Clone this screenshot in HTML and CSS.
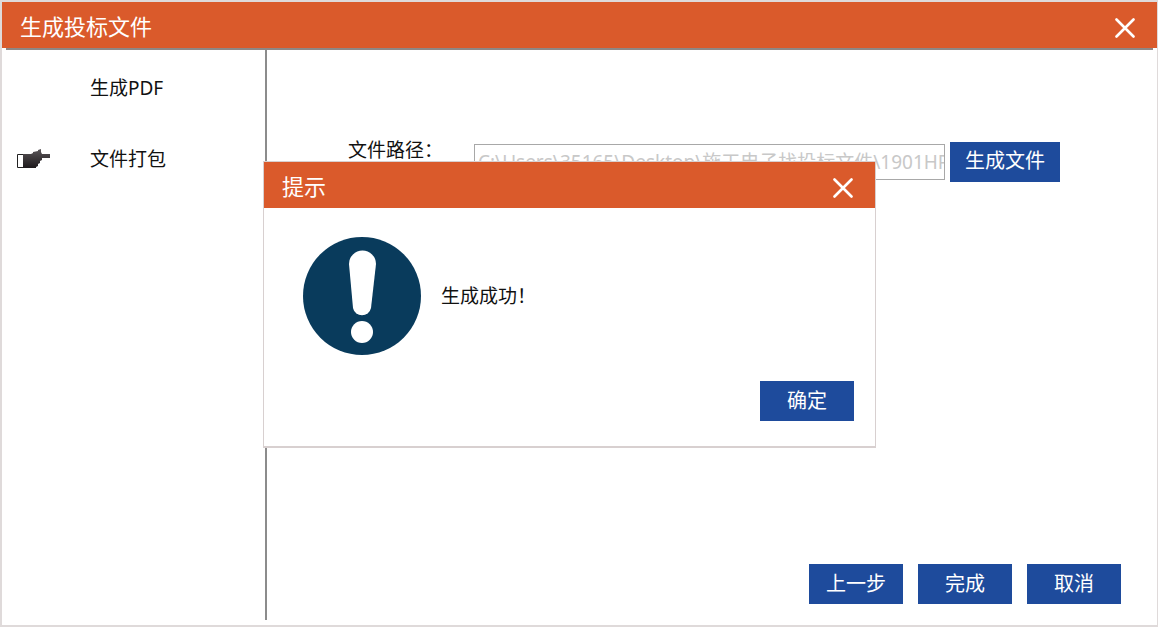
FILE: index.html
```html
<!DOCTYPE html>
<html lang="zh-CN">
<head>
    <meta charset="UTF-8">
    <title>生成投标文件</title>
    <link rel="stylesheet" href="styles.css">
</head>
<body>
    <div class="window">
        <header class="title-bar">
            <h1 class="title">生成投标文件</h1>
            <button type="button" class="close-btn" aria-label="关闭">
                <svg class="close-icon" viewBox="0 0 20 20" fill="none" stroke="#fff" stroke-width="2.600" stroke-linecap="round">
                    <path d="M1.500 1.500L18.500 18.500M18.500 1.500L1.500 18.500"></path>
                </svg>
            </button>
        </header>
        <div class="content">
            <ol class="steps">
                <li class="step">生成PDF</li>
                <li class="step active">
                    <svg class="hand-icon" viewBox="0 0 34 20">
                        <defs>
                            <linearGradient id="hand-fill" x1="0" y1="0" x2="0" y2="1">
                                <stop offset="0" stop-color="#5b5659"></stop>
                                <stop offset="1" stop-color="#1d191b"></stop>
                            </linearGradient>
                        </defs>
                        <path d="M0.500 5.500H7V18.500H0.500Z" fill="#fff" stroke="#222" stroke-width="1"></path>
                        <path d="M6 5H14L16 4V3L21 2V1L24 0V3L25 5H33V9H25V11L23 12V14L21 15V17L19 18V19H6Z" fill="url(#hand-fill)"></path>
                    </svg>
                    文件打包
                </li>
            </ol>
            <main class="main">
                <div class="path-row">
                    <label class="path-label" for="file-path">文件路径：</label>
                    <input type="text" id="file-path" class="path-input" value="C:\Users\35165\Desktop\施工电子找投标文件\1901HP" disabled>
                    <button type="button" class="btn btn-wide">生成文件</button>
                </div>
                <div class="actions">
                    <button type="button" class="btn">上一步</button>
                    <button type="button" class="btn">完成</button>
                    <button type="button" class="btn">取消</button>
                </div>
            </main>
        </div>

        <div class="popup" role="dialog" aria-labelledby="popup-title">
            <div class="title-bar">
                <h2 class="title" id="popup-title">提示</h2>
                <button type="button" class="close-btn" aria-label="关闭">
                    <svg class="close-icon" viewBox="0 0 20 20" fill="none" stroke="#fff" stroke-width="2.600" stroke-linecap="round">
                        <path d="M1.500 1.500L18.500 18.500M18.500 1.500L1.500 18.500"></path>
                    </svg>
                </button>
            </div>
            <div class="popup-body">
                <svg class="alert-icon" viewBox="0 0 118 118">
                    <circle cx="59" cy="59" r="59" fill="#093b5c"></circle>
                    <path d="M46 27A13.500 13.500 0 0 1 73 27L68 71A9.200 9.200 0 0 1 50 71Z" fill="#fff"></path>
                    <circle cx="59" cy="95" r="11" fill="#fff"></circle>
                </svg>
                <p class="popup-text">生成成功！</p>
            </div>
            <div class="popup-footer">
                <button type="button" class="btn">确定</button>
            </div>
        </div>
    </div>
</body>
</html>
```

FILE: styles.css
```css
* {
    box-sizing: border-box;
}

body {
    margin: 0;
    background-color: #fff;
    font-family: "Noto Sans", "Noto Sans CJK SC", sans-serif;
    font-size: 19px;
    line-height: 28px;
    color: #111;
}

.window {
    position: relative;
    display: flex;
    flex-direction: column;
    min-height: 100vh;
    border: 2px solid #dfdada;
    border-right-width: 1px;
}

.title-bar {
    display: flex;
    align-items: center;
    justify-content: space-between;
    height: 46px;
    padding: 2px 20px 0 18px;
    background-color: #da5a2b;
}

.title {
    margin: 0;
    font-size: 22px;
    font-weight: normal;
    color: #fff;
}

.close-btn {
    display: flex;
    padding: 4px 2px 0;
    border: none;
    background: none;
    cursor: pointer;
}

.close-icon {
    width: 20px;
    height: 20px;
}

.content {
    display: flex;
    flex: 1;
    margin: 0 4px;
    padding-bottom: 5px;
    border-top: 2px solid #8e8785;
}

.steps {
    width: 261px;
    margin: 0;
    padding: 24px 11px;
    border-right: 2px solid #8c8c8c;
    list-style-type: none;
}

.step {
    display: flex;
    align-items: center;
    height: 28px;
    margin-bottom: 43px;
    padding-left: 73px;
}

.step.active {
    padding-left: 0;
}

.hand-icon {
    width: 34px;
    height: 20px;
    margin-right: 39px;
}

.main {
    display: flex;
    flex: 1;
    flex-direction: column;
    justify-content: space-between;
    padding: 92px 32px 16px 81px;
}

.path-row {
    display: flex;
    align-items: flex-start;
    margin-right: 61px;
}

.path-label {
    width: 126px;
    margin-top: -6px;
}

.path-input {
    flex: 1;
    min-width: 0;
    height: 36px;
    margin: 2px 5px 0 0;
    padding: 0 0 2px 3px;
    border: 1px solid #a8a8a8;
    background-color: #fff;
    font-family: inherit;
    font-size: 19px;
    color: #c8c8c8;
}

.actions {
    display: flex;
    justify-content: flex-end;
    gap: 15px;
}

.btn {
    width: 94px;
    height: 40px;
    padding: 0 0 4px;
    border: none;
    background-color: #1e4b9c;
    font-family: inherit;
    font-size: 20px;
    color: #fff;
    cursor: pointer;
}

.btn-wide {
    width: 110px;
    padding-bottom: 6px;
}

.popup {
    position: absolute;
    top: 159px;
    left: 261px;
    width: 613px;
    border: 1px solid #d8d0d0;
    border-bottom-width: 2px;
    background-color: #fff;
}

.popup-body {
    display: flex;
    align-items: center;
    gap: 20px;
    padding: 29px 39px 26px;
}

.alert-icon {
    width: 118px;
    height: 118px;
}

.popup-text {
    margin: 0;
}

.popup-footer {
    display: flex;
    justify-content: flex-end;
    padding: 0 21px 25px;
}
```
